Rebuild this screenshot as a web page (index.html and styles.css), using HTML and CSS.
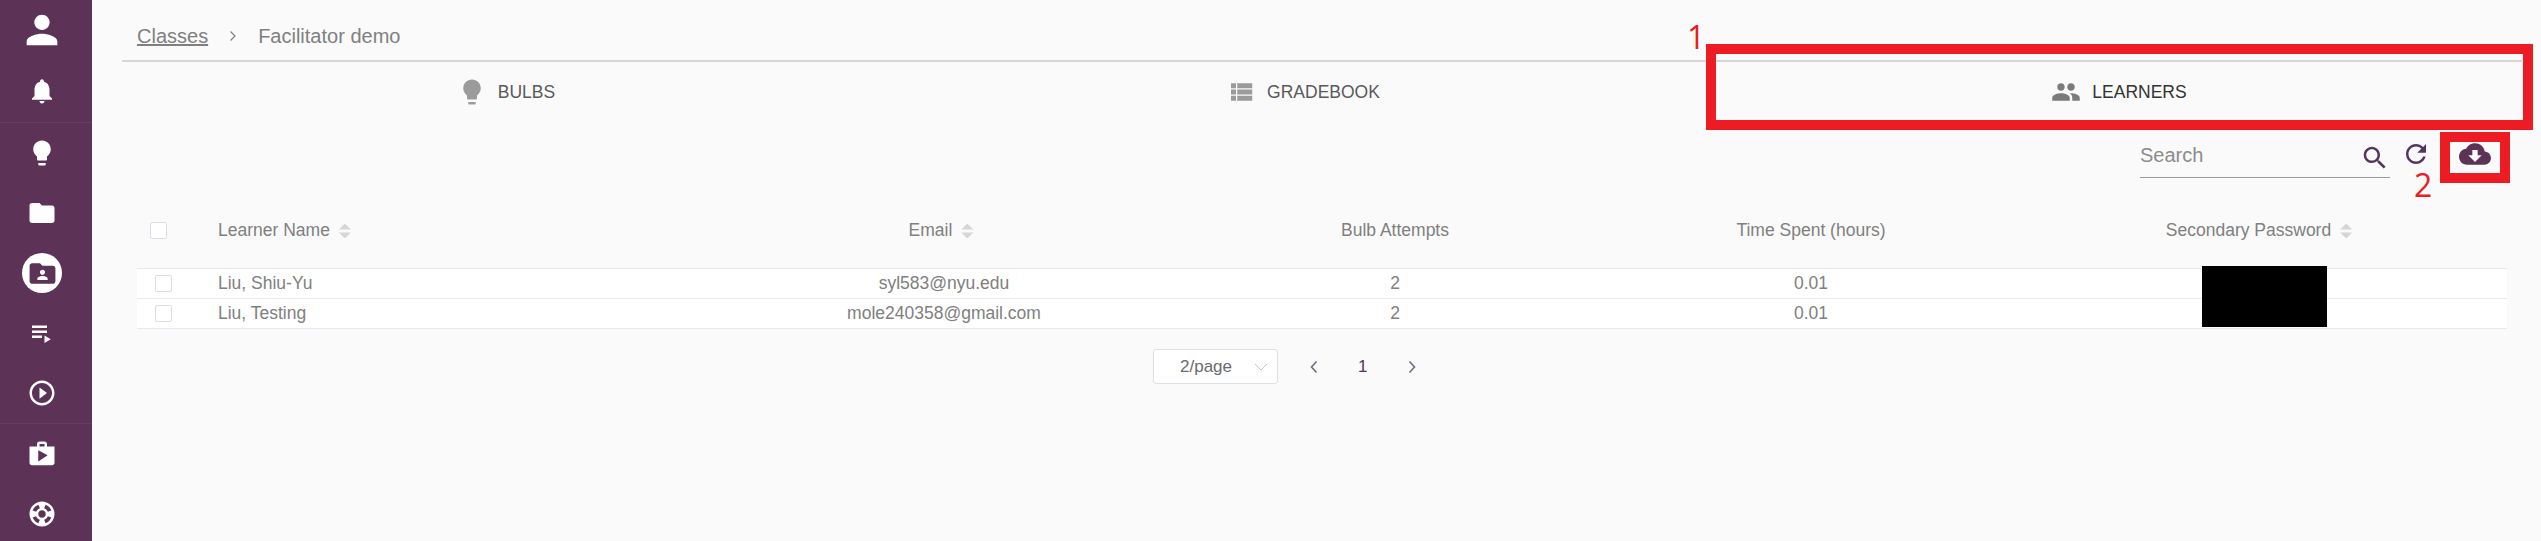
FILE: index.html
```html
<!DOCTYPE html>
<html lang="en">
<head>
<meta charset="utf-8">
<title>Facilitator demo</title>
<link rel="stylesheet" href="styles.css">
</head>
<body>
<div class="app">
  <nav class="sidebar">
    <div class="nav-group nav-group-top">
      <a class="nav-item"><svg class="nav-user" viewBox="0 0 24 24"><path d="M12 12c2.21 0 4-1.79 4-4s-1.79-4-4-4-4 1.79-4 4 1.79 4 4 4zm0 2c-2.67 0-8 1.34-8 4v2h16v-2c0-2.66-5.33-4-8-4z"/></svg></a>
      <a class="nav-item nav-item-bell"><svg viewBox="0 0 24 24"><path d="M12 22c1.1 0 2-.9 2-2h-4c0 1.1.89 2 2 2zm6-6v-5c0-3.07-1.64-5.64-4.5-6.32V4c0-.83-.67-1.5-1.5-1.5s-1.5.67-1.5 1.5v.68C7.63 5.36 6 7.92 6 11v5l-2 2v1h16v-1l-2-2z"/></svg></a>
    </div>
    <div class="nav-group">
      <a class="nav-item"><svg viewBox="0 0 24 24"><path d="M9 21c0 .55.45 1 1 1h4c.55 0 1-.45 1-1v-1H9v1zm3-19C8.14 2 5 5.14 5 9c0 2.38 1.19 4.47 3 5.74V17c0 .55.45 1 1 1h6c.55 0 1-.45 1-1v-2.26c1.81-1.27 3-3.36 3-5.74 0-3.86-3.14-7-7-7z"/></svg></a>
      <a class="nav-item"><svg viewBox="0 0 24 24"><path d="M10 4H4c-1.1 0-1.99.9-1.99 2L2 18c0 1.1.9 2 2 2h16c1.1 0 2-.9 2-2V8c0-1.1-.9-2-2-2h-8l-2-2z"/></svg></a>
      <a class="nav-item"><span class="nav-circle"><svg viewBox="0 0 24 24"><path d="M20 6h-8l-2-2H4c-1.1 0-1.99.9-1.99 2L2 18c0 1.1.9 2 2 2h16c1.1 0 2-.9 2-2V8c0-1.1-.9-2-2-2zm-8 3c1.1 0 2 .9 2 2s-.9 2-2 2-2-.9-2-2 .9-2 2-2zm4 8H8v-1c0-1.33 2.67-2 4-2s4 .67 4 2v1z"/></svg></span></a>
      <a class="nav-item"><svg viewBox="0 0 24 24"><path d="M4 10h12v2H4zm0-4h12v2H4zm0 8h8v2H4zm10 0v6l5-3z"/></svg></a>
      <a class="nav-item"><svg viewBox="0 0 24 24"><path d="M10 16.5l6-4.5-6-4.5v9zM12 2C6.48 2 2 6.48 2 12s4.48 10 10 10 10-4.48 10-10S17.52 2 12 2zm0 18c-4.41 0-8-3.59-8-8s3.59-8 8-8 8 3.59 8 8-3.59 8-8 8z"/></svg></a>
    </div>
    <div class="nav-group">
      <a class="nav-item"><svg viewBox="0 0 24 24"><path d="M16 6V4c0-1.11-.89-2-2-2h-4c-1.11 0-2 .89-2 2v2H2v13c0 1.11.89 2 2 2h16c1.11 0 2-.89 2-2V6h-6zm-6-2h4v2h-4V4zM9 18V9l7.5 4L9 18z"/></svg></a>
      <a class="nav-item"><svg viewBox="0 0 24 24"><path d="M12 2C6.48 2 2 6.48 2 12s4.48 10 10 10 10-4.48 10-10S17.52 2 12 2zm7.46 7.12l-2.78 1.15c-.51-1.36-1.58-2.44-2.95-2.94l1.15-2.78c2.1.8 3.77 2.47 4.58 4.57zM12 15c-1.66 0-3-1.34-3-3s1.34-3 3-3 3 1.34 3 3-1.34 3-3 3zM9.13 4.54l1.17 2.78c-1.38.5-2.47 1.59-2.98 2.97L4.54 9.13c.81-2.11 2.48-3.78 4.59-4.59zM4.54 14.87l2.78-1.15c.51 1.38 1.59 2.46 2.97 2.96l-1.17 2.78c-2.1-.81-3.77-2.48-4.58-4.59zm10.34 4.59l-1.15-2.78c1.37-.51 2.45-1.59 2.95-2.97l2.78 1.17c-.81 2.1-2.48 3.77-4.58 4.58z"/></svg></a>
    </div>
  </nav>
  <main class="content">
    <header class="breadcrumb">
      <a class="crumb-link">Classes</a>
      <svg class="crumb-sep" viewBox="0 0 10 12"><path d="M2.500 1.500 7 6l-4.500 4.500"/></svg>
      <span class="crumb-current">Facilitator demo</span>
    </header>
    <div class="tabs">
      <div class="tab"><svg viewBox="0 0 24 24"><path d="M9 21c0 .55.45 1 1 1h4c.55 0 1-.45 1-1v-1H9v1zm3-19C8.14 2 5 5.14 5 9c0 2.38 1.19 4.47 3 5.74V17c0 .55.45 1 1 1h6c.55 0 1-.45 1-1v-2.26c1.81-1.27 3-3.36 3-5.74 0-3.86-3.14-7-7-7z"/></svg><span>BULBS</span></div>
      <div class="tab"><svg viewBox="0 0 24 24"><path d="M4 14h4v-4H4v4zm0 5h4v-4H4v4zM4 9h4V5H4v4zm5 5h12v-4H9v4zm0 5h12v-4H9v4zM9 5v4h12V5H9z"/></svg><span>GRADEBOOK</span></div>
      <div class="tab tab-active"><svg viewBox="0 0 24 24"><path d="M16 11c1.66 0 2.99-1.34 2.99-3S17.66 5 16 5c-1.66 0-3 1.340-3 3s1.34 3 3 3zm-8 0c1.66 0 2.99-1.34 2.99-3S9.660 5 8 5C6.34 5 5 6.34 5 8s1.34 3 3 3zm0 2c-2.33 0-7 1.17-7 3.5V19h14v-2.500c0-2.33-4.67-3.500-7-3.500zm8 0c-.29 0-.62.02-.97.05 1.16.84 1.97 1.97 1.97 3.45V19h6v-2.500c0-2.33-4.67-3.500-7-3.500z"/></svg><span>LEARNERS</span></div>
    </div>
    <div class="toolbar">
      <div class="search"><span class="search-text">Search</span><svg viewBox="0 0 24 24"><path d="M15.5 14h-.79l-.28-.27C15.41 12.59 16 11.11 16 9.5 16 5.91 13.09 3 9.500 3S3 5.91 3 9.500 5.910 16 9.500 16c1.61 0 3.09-.59 4.23-1.57l.27.28v.79l5 4.99L20.49 19l-4.99-5zm-6 0C7.01 14 5 11.99 5 9.500S7.01 5 9.500 5 14 7.010 14 9.500 11.99 14 9.500 14z"/></svg></div>
      <svg class="tool-icon tool-refresh" viewBox="0 0 24 24"><path d="M17.65 6.35C16.2 4.900 14.21 4 12 4c-4.420 0-7.990 3.580-7.990 8s3.570 8 7.990 8c3.730 0 6.840-2.550 7.730-6h-2.080c-.820 2.330-3.040 4-5.650 4-3.310 0-6-2.690-6-6s2.690-6 6-6c1.660 0 3.140.690 4.220 1.780L13 11h7V4l-2.350 2.350z"/></svg>
      <svg class="tool-icon tool-cloud" viewBox="0 0 24 24"><path d="M19.350 10.040C18.670 6.590 15.640 4 12 4 9.110 4 6.600 5.640 5.350 8.040 2.340 8.360 0 10.910 0 14c0 3.310 2.690 6 6 6h13c2.760 0 5-2.240 5-5 0-2.640-2.050-4.780-4.650-4.960zM17 13l-5 5-5-5h3V9h4v4h3z"/></svg>
    </div>
    <table class="grid">
      <colgroup><col class="c-check"><col class="c-name"><col class="c-email"><col class="c-bulb"><col class="c-time"><col class="c-pass"></colgroup>
      <thead>
        <tr>
          <th class="cell-check"><span class="checkbox"></span></th>
          <th class="cell-left">Learner Name<span class="sort"></span></th>
          <th>Email<span class="sort"></span></th>
          <th>Bulb Attempts</th>
          <th>Time Spent (hours)</th>
          <th class="cell-last">Secondary Password<span class="sort"></span></th>
        </tr>
      </thead>
      <tbody>
        <tr>
          <td class="cell-check"><span class="checkbox"></span></td>
          <td class="cell-left">Liu, Shiu-Yu</td>
          <td class="cell-email">syl583@nyu.edu</td>
          <td>2</td>
          <td>0.01</td>
          <td></td>
        </tr>
        <tr>
          <td class="cell-check"><span class="checkbox"></span></td>
          <td class="cell-left">Liu, Testing</td>
          <td class="cell-email">mole240358@gmail.com</td>
          <td>2</td>
          <td>0.01</td>
          <td></td>
        </tr>
      </tbody>
    </table>
    <div class="pager">
      <div class="page-size"><span>2/page</span><svg viewBox="0 0 14 8"><path d="M1 1l6 6 6-6"/></svg></div>
      <svg class="page-arrow" viewBox="0 0 10 14"><path d="M7.500 1.500 2.500 7l5 5.500"/></svg>
      <span class="page-num">1</span>
      <svg class="page-arrow" viewBox="0 0 10 14"><path d="M2.500 1.500 7.500 7l-5 5.500"/></svg>
    </div>
  </main>
</div>
<div class="redact"></div>
<div class="mark mark-tabs"></div>
<div class="mark mark-download"></div>
<span class="mark-label mark-label-1">1</span>
<span class="mark-label mark-label-2">2</span>
</body>
</html>
```
FILE: styles.css
```css
* { box-sizing: border-box; }
html, body { margin: 0; height: 100%; overflow: hidden; }
body { background: #fafafa; font-family: "Liberation Sans", Arial, sans-serif; color: #808080; position: relative; }
.app { display: flex; height: 541px; overflow: hidden; }

.sidebar { width: 92px; flex: none; background: #5c3357; display: flex; flex-direction: column; overflow: hidden; }
.nav-group { flex: none; border-bottom: 1px solid #5f4069; }
.nav-group:last-child { border-bottom: 0; }
.nav-group-top { height: 123px; }
.nav-item { display: flex; align-items: center; justify-content: center; height: 60px; padding-right: 8px; }
.nav-item-bell { height: 62px; }
.nav-item svg { width: 30px; height: 30px; fill: #fff; display: block; }
.nav-item .nav-user { width: 46px; height: 46px; }
.nav-circle { width: 40px; height: 40px; border-radius: 50%; background: #fff; display: flex; align-items: center; justify-content: center; }
.nav-item .nav-circle svg { fill: #5c3357; width: 31px; height: 31px; }

.content { flex: 1; min-width: 0; padding: 0 19px 0 30px; }
.breadcrumb { height: 62px; border-bottom: 2px solid #d6d6d6; display: flex; align-items: center; padding: 12px 0 0 15px; font-size: 20px; color: #808080; width: 2400px; }
.crumb-link { text-decoration: underline; }
.crumb-sep { width: 10px; height: 12px; margin: 0 20px 0 20px; fill: none; stroke: #808080; stroke-width: 1.200; }
.tabs { display: grid; grid-template-columns: 768px 826px 806px; width: 2400px; height: 60px; }
.tab { display: flex; align-items: center; justify-content: center; gap: 11px; font-size: 17.500px; color: #5a5a5a; }
.tab svg { width: 30px; height: 30px; fill: #9b9b9b; }
.tab-active { color: #333; }
.tab-active svg { fill: #7b7b7b; }

.toolbar { display: flex; align-items: flex-start; padding: 14px 0 0 2018px; height: 84px; }
.search { width: 250px; height: 42px; border-bottom: 1px solid #999; display: flex; align-items: center; justify-content: space-between; padding: 0 0 4px 0; font-size: 20px; color: #8c8c8c; }
.search-text { margin-top: 2px; }
.search svg { width: 30px; height: 30px; fill: #553560; margin-top: 6px; }
.tool-icon { width: 30px; height: 30px; fill: #553560; flex: none; }
.tool-refresh { margin: 3px 0 0 11px; }
.tool-cloud { width: 32px; height: 32px; margin: 2px 0 0 28px; fill: #5c3357; }

.grid { border-collapse: separate; border-spacing: 0; table-layout: fixed; width: 2370px; margin-left: 15px; font-size: 17.500px; }
.c-check { width: 81px; } .c-name { width: 473px; } .c-email { width: 500px; } .c-bulb { width: 408px; } .c-time { width: 424px; } .c-pass { width: 484px; }
th { height: 63px; font-weight: 400; text-align: center; padding: 0 0 14px; color: #808080; border-bottom: 1px solid #e8e8f0; white-space: nowrap; }
td { height: 30px; padding: 0; text-align: center; background: #fff; border-bottom: 1px solid #e8e8f0; color: #808080; }
td.cell-email { padding-left: 6px; }
th.cell-last { padding-right: 12px; }
.cell-left { text-align: left; }
.cell-check { text-align: left; }
th.cell-check { padding-left: 13px; }
td.cell-check { padding-left: 18px; }
.checkbox { display: block; width: 17px; height: 17px; background: #fff; border: 1px solid #dcdce6; border-radius: 2px; }
.sort { display: inline-block; vertical-align: middle; width: 12px; height: 15px; margin-left: 9px; background: #d6d6d6; clip-path: polygon(50% 0, 100% 40%, 0 40%, 50% 0, 50% 60%, 100% 60%, 50% 100%, 0 60%, 50% 60%); }

.pager { display: flex; align-items: center; padding: 20px 0 0 1031px; }
.page-size { width: 125px; height: 35px; background: #fff; border: 1px solid #dfdfe6; border-radius: 3px; display: flex; align-items: center; justify-content: space-between; padding: 0 9px 0 26px; font-size: 17px; color: #6b6b6b; }
.page-size svg { width: 14px; height: 8px; fill: none; stroke: #c4c4cc; stroke-width: 1; }
.page-arrow { width: 10px; height: 14px; fill: none; stroke: #6b6e80; stroke-width: 1.600; margin-left: 31px; }
.page-num { font-size: 17px; color: #5c3357; margin-left: 39px; margin-right: 9px; }

.redact { position: absolute; left: 2202px; top: 266px; width: 125px; height: 61px; background: #000; }
.mark { position: absolute; border: 10px solid #ed1c24; }
.mark-tabs { left: 1706px; top: 44px; width: 827px; height: 86px; }
.mark-download { left: 2440px; top: 132px; width: 70px; height: 51px; }
.mark-label { position: absolute; color: #ed1c24; font-family: "Open Sans", sans-serif; font-size: 32px; line-height: 1; }
.mark-label-1 { left: 1687px; top: 21px; }
.mark-label-2 { left: 2414px; top: 169px; }
```
